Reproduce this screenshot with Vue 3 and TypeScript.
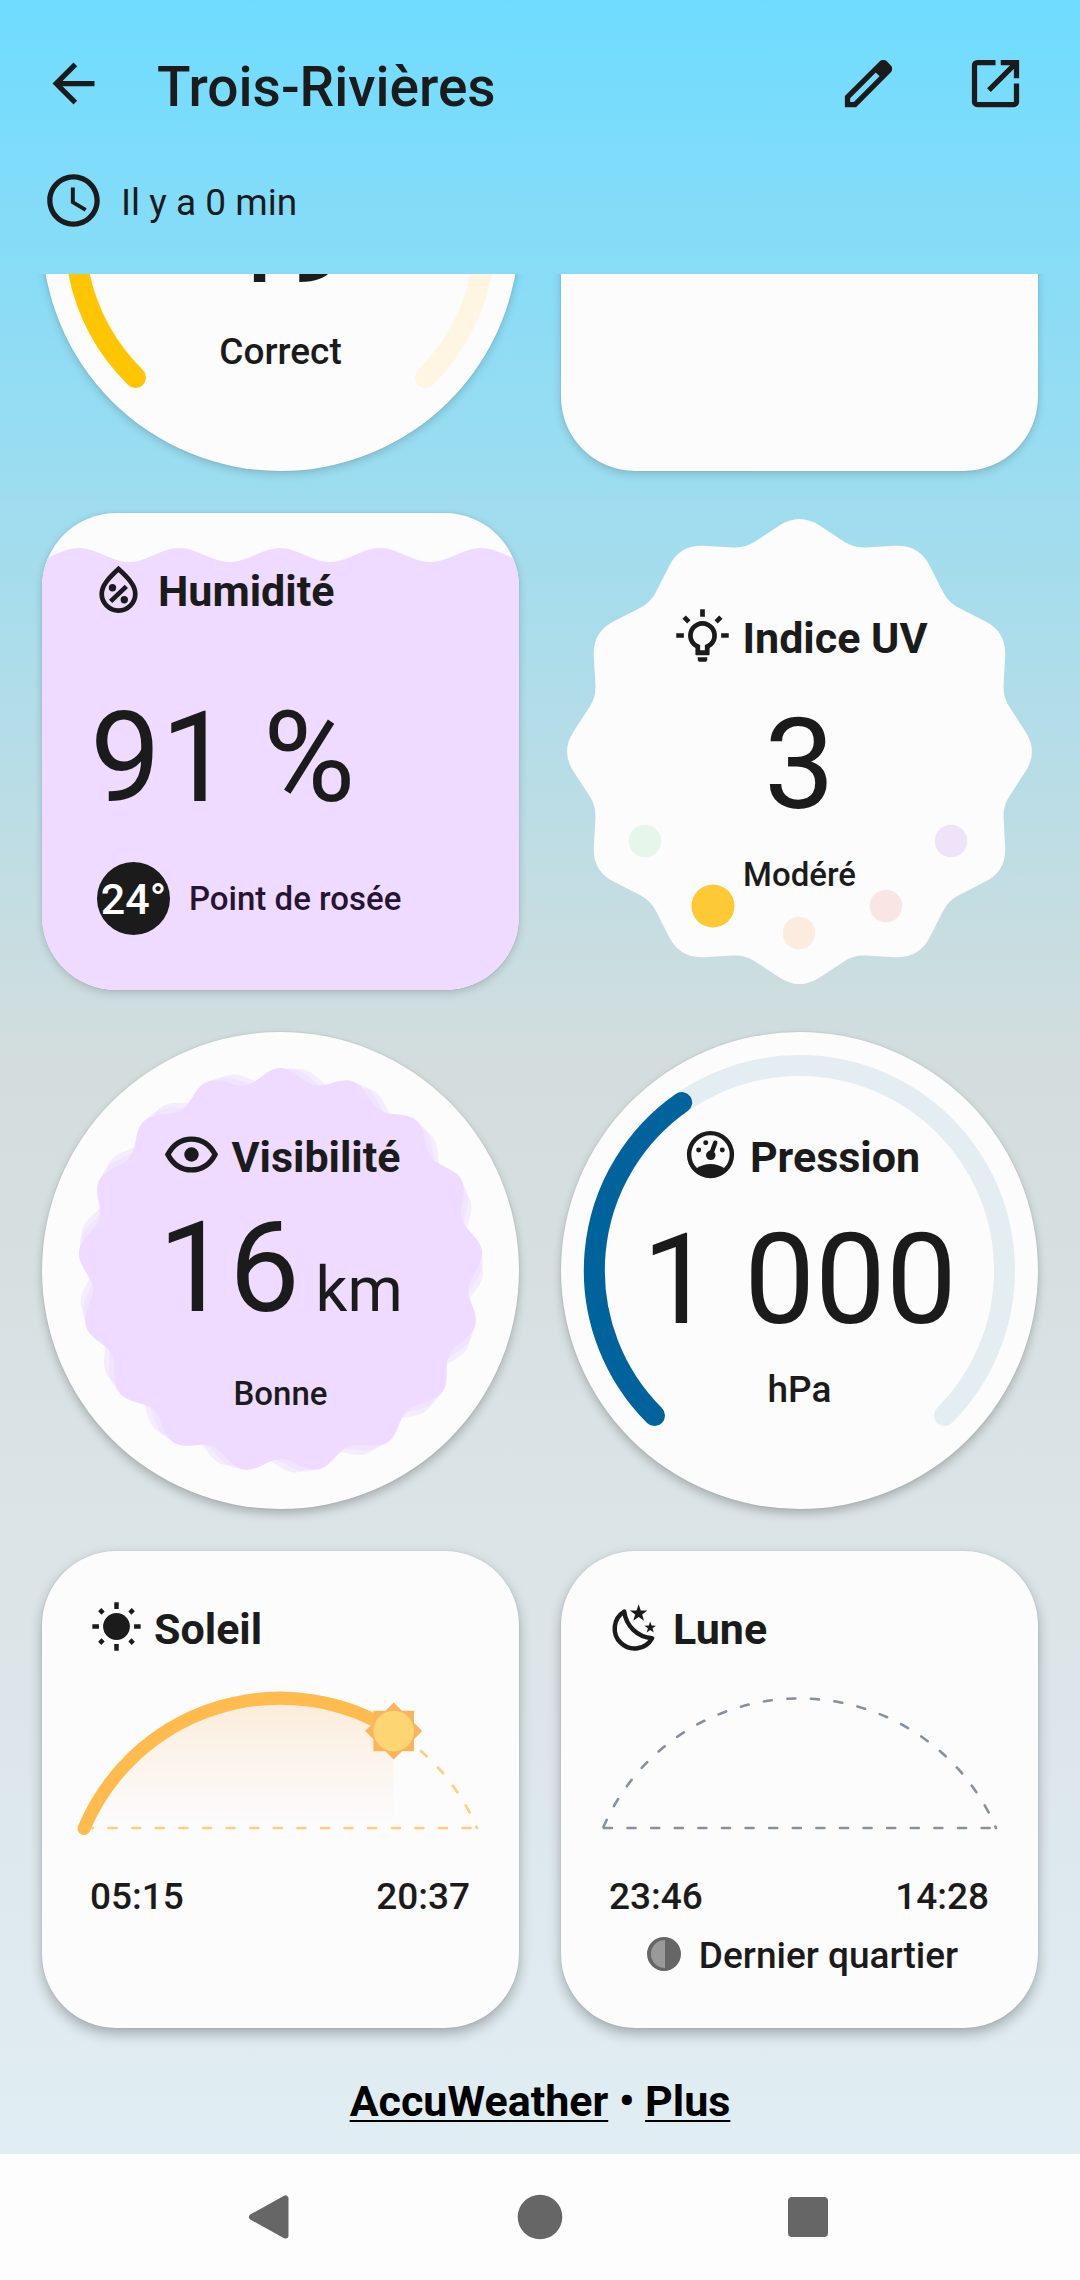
<script setup lang="ts">
interface Point {
  x: number
  y: number
}

interface UvDot extends Point {
  color: string
  active?: boolean
}

const polar = (cx: number, cy: number, radius: number, degrees: number): Point => {
  const rad = ((degrees - 90) * Math.PI) / 180
  return { x: cx + radius * Math.cos(rad), y: cy + radius * Math.sin(rad) }
}

const fmt = (p: Point): string => `${p.x.toFixed(2)} ${p.y.toFixed(2)}`

const towards = (from: Point, to: Point, distance: number): Point => {
  const length = Math.hypot(to.x - from.x, to.y - from.y)
  return {
    x: from.x + ((to.x - from.x) * distance) / length,
    y: from.y + ((to.y - from.y) * distance) / length,
  }
}

/* Star polygon whose tips and valleys are rounded off */
const roundedStar = (tips: number, outer: number, inner: number): string => {
  const count = tips * 2
  const vertices = Array.from({ length: count }, (_, i) =>
    polar(238.5, 238.5, i % 2 ? inner : outer, (360 / count) * i),
  )
  const parts = vertices.map((vertex, i) => {
    const previous = vertices[(i + count - 1) % count]
    const next = vertices[(i + 1) % count]
    const cut = i % 2 ? 12 : 24
    const start = towards(vertex, previous, cut)
    const end = towards(vertex, next, cut)
    return `${i ? 'L' : 'M'}${fmt(start)}Q${fmt(vertex)} ${fmt(end)}`
  })
  return parts.join('') + 'Z'
}

/* Circle with a sinusoidal edge */
const scallop = (lobes: number, radius: number, amplitude: number): string => {
  const points: string[] = []
  for (let degrees = 0; degrees < 360; degrees += 1) {
    const wave = amplitude * Math.cos((degrees * lobes * Math.PI) / 180)
    points.push(fmt(polar(238.5, 238.5, radius + wave, degrees)))
  }
  return `M${points.join('L')}Z`
}

const star = (cx: number, cy: number, radius: number): string =>
  Array.from({ length: 10 }, (_, i) =>
    fmt(polar(cx, cy, i % 2 ? radius * 0.4 : radius, i * 36)),
  ).join(' ')

const uvShape = roundedStar(12, 239, 210.6)
const visibilityShape = scallop(17, 195.5, 7)
const bigStar = star(13.2, 7, 3.5)
const smallStar = star(17.6, 12.4, 2.3)
const rayAngles = [0, 90, 180, 270]

const uvDots: UvDot[] = [
  { x: 84, y: 328, color: '#e6f6ea' },
  { x: 152, y: 393, color: '#fdc935', active: true },
  { x: 238, y: 420, color: '#fcebdf' },
  { x: 325, y: 393, color: '#f9e5e3' },
  { x: 390, y: 328, color: '#efe3fa' },
]
</script>

<template>
  <div class="page">
    <header class="top">
      <div class="bar">
        <button class="icon-button" type="button" aria-label="Retour">
          <svg class="icon" viewBox="0 0 24 24">
            <path d="M20 11H7.83l5.59-5.59L12 4l-8 8 8 8 1.41-1.41L7.83 13H20v-2z" />
          </svg>
        </button>
        <h1 class="place">Trois-Rivières</h1>
        <div class="actions">
          <button class="icon-button" type="button" aria-label="Modifier">
            <svg class="icon" viewBox="0 0 24 24">
              <path
                fill-rule="evenodd"
                d="M3 21v-4.25L16.2 3.575q.3-.275.663-.425t.762-.15.775.15.65.45L20.425 5q.3.275.438.65T21 6.4t-.137.763-.438.662L7.25 21zM5 19h1.425L16.2 9.225 14.775 7.8 5 17.575z"
              />
            </svg>
          </button>
          <button class="icon-button" type="button" aria-label="Ouvrir">
            <svg class="icon line" viewBox="0 0 24 24" stroke-width="2">
              <path d="M12 4H5a1 1 0 0 0-1 1v14a1 1 0 0 0 1 1h14a1 1 0 0 0 1-1v-7M14 4h6v6M20 4 9.5 14.5" />
            </svg>
          </button>
        </div>
      </div>
      <p class="updated">
        <svg class="icon" viewBox="0 0 24 24" aria-hidden="true">
          <path
            d="M11.99 2C6.47 2 2 6.48 2 12s4.47 10 9.99 10C17.52 22 22 17.52 22 12S17.52 2 11.99 2zM12 20c-4.42 0-8-3.58-8-8s3.58-8 8-8 8 3.58 8 8-3.58 8-8 8zm.5-13H11v6l5.25 3.15.75-1.23-4.5-2.67z"
          />
        </svg>
        <span>Il y a 0 min</span>
      </p>
    </header>

    <main class="scroller">
      <div class="grid">
        <section class="card dial air">
          <svg class="art" viewBox="0 0 477 477" aria-hidden="true">
            <path class="arc" stroke="#fef6e2" d="M93.5 383.5A205 205 0 1 1 383.5 383.5" />
            <path class="arc" stroke="#ffc500" d="M93.5 383.5A205 205 0 0 1 50 155" />
          </svg>
          <p class="value">49</p>
          <p class="caption large">Correct</p>
        </section>

        <section class="card"></section>

        <section class="card humidity">
          <svg class="art" viewBox="0 0 477 477" aria-hidden="true">
            <path
              fill="#eedbff"
              d="M-13 49C5 49 19 35 37 35S69 49 87 49 119 35 137 35 170 49 188 49 220 35 238 35 270 49 288 49 320 35 338 35 370 49 388 49 421 35 439 35 471 49 489 49V477H-13Z"
            />
          </svg>
          <h2 class="heading">
            <svg class="icon line" viewBox="0 0 24 24" stroke-width="1.8" aria-hidden="true">
              <path d="M12 4.6C8.5 7.8 5.6 10.7 5.6 14a6.4 6.4 0 0 0 12.8 0C18.4 10.7 15.5 7.8 12 4.6zM9 16.9l6-5.7" />
              <circle class="solid" cx="9.7" cy="11.7" r="1.4" />
              <circle class="solid" cx="14.2" cy="16.3" r="1.4" />
            </svg>
            <span>Humidité</span>
          </h2>
          <p class="value">91 %</p>
          <p class="dew">
            <span class="badge">24°</span>
            <span class="dew-label">Point de rosée</span>
          </p>
        </section>

        <section class="card dial uv">
          <svg class="art" viewBox="0 0 477 477" aria-hidden="true">
            <path fill="#fcfcfc" :d="uvShape" />
            <circle
              v-for="dot in uvDots"
              :key="dot.color"
              :cx="dot.x"
              :cy="dot.y"
              :r="dot.active ? 21.5 : 16.3"
              :fill="dot.color"
            />
          </svg>
          <h2 class="heading">
            <svg class="icon line" viewBox="0 0 24 24" stroke-width="1.8" aria-hidden="true">
              <path d="M12 2v2.9M2 12h2.9M19.1 12H22M5 5l1.8 1.8M19 5l-1.8 1.8" />
              <path
                class="solid"
                fill-rule="evenodd"
                d="M9.3 19.2V16.8A5.5 5.5 0 1 1 14.7 16.8V19.2Q14.7 19.5 14.4 19.5H9.6Q9.3 19.5 9.3 19.2ZM11.1 17.6H12.9V15.6A3.7 3.7 0 1 0 11.1 15.6Z"
              />
              <path class="solid" d="M10.2 20.3h3.6v.7a1 1 0 0 1-1 1h-1.6a1 1 0 0 1-1-1z" />
            </svg>
            <span>Indice UV</span>
          </h2>
          <p class="value">3</p>
          <p class="caption">Modéré</p>
        </section>

        <section class="card dial visibility">
          <svg class="art" viewBox="0 0 477 477" aria-hidden="true">
            <g fill="#eedbff">
              <path opacity=".5" transform="rotate(6 238.5 238.5)" :d="visibilityShape" />
              <path opacity=".5" transform="rotate(3 238.5 238.5)" :d="visibilityShape" />
              <path :d="visibilityShape" />
            </g>
          </svg>
          <h2 class="heading">
            <svg class="icon line" viewBox="0 0 24 24" stroke-width="2" aria-hidden="true">
              <path d="M3 12C5 8.2 8.2 6.1 12 6.1S19 8.2 21 12C19 15.8 15.8 17.9 12 17.9S5 15.8 3 12Z" />
              <circle class="solid" cx="12" cy="12" r="2.75" />
            </svg>
            <span>Visibilité</span>
          </h2>
          <p class="value">16<span class="unit"> km</span></p>
          <p class="caption">Bonne</p>
        </section>

        <section class="card dial pressure">
          <svg class="art" viewBox="0 0 477 477" aria-hidden="true">
            <path class="arc" stroke="#e4edf2" d="M93.5 383.5A205 205 0 1 1 383.5 383.5" />
            <path class="arc" stroke="#00639b" d="M93.5 383.5A205 205 0 0 1 120.7 70.5" />
          </svg>
          <h2 class="heading">
            <svg class="icon line" viewBox="0 0 24 24" stroke-width="1.7" aria-hidden="true">
              <circle cx="12" cy="12" r="8.15" />
              <path stroke-linecap="round" d="M12.1 12.2 13.8 7.5" />
              <circle class="solid" cx="12.1" cy="12.3" r="1.8" />
              <circle class="solid" cx="7.5" cy="10.3" r=".95" />
              <circle class="solid" cx="10.2" cy="7.5" r=".95" />
              <circle class="solid" cx="16.5" cy="10.3" r=".95" />
              <path class="solid" d="M5.8 18.2L6.8 17.1Q12 14.2 17.2 17.1L18.2 18.2A8.7 8.7 0 0 1 5.8 18.2Z" />
            </svg>
            <span>Pression</span>
          </h2>
          <p class="value">1 000</p>
          <p class="caption large">hPa</p>
        </section>

        <section class="card astro">
          <h2 class="heading">
            <svg class="icon line" viewBox="0 0 24 24" stroke-width="1.7" aria-hidden="true">
              <circle class="solid" cx="12" cy="12" r="5.1" />
              <g v-for="angle in rayAngles" :key="angle" :transform="`rotate(${angle} 12 12)`">
                <path d="M12 2.8v2.5M17.1 6.9l1.3-1.3" />
              </g>
            </svg>
            <span>Soleil</span>
          </h2>
          <svg class="course" viewBox="43 113 391 207" aria-hidden="true">
            <defs>
              <linearGradient id="daylight" x1="0" y1="0" x2="0" y2="1">
                <stop offset="0" stop-color="#fbecda" />
                <stop offset=".5" stop-color="#fcf4ed" />
                <stop offset="1" stop-color="#fcfcfe" />
              </linearGradient>
            </defs>
            <path fill="url(#daylight)" d="M42 277A213.8 213.8 0 0 1 351.7 180V277Z" />
            <path class="dash day" d="M42 277H434M42 277A213.8 213.8 0 0 1 435 277" />
            <path
              fill="none"
              stroke="#ffbb4d"
              stroke-width="13"
              stroke-linecap="round"
              d="M42 277.5A212.8 212.8 0 0 1 351.7 180"
            />
            <g fill="#fab55c" transform="translate(351.7 180)">
              <path d="M-20.3-20.3H20.3V20.3H-20.3ZM0-28.5 28.5 0 0 28.5-28.5 0Z" />
              <circle r="20.3" fill="#fed573" />
            </g>
          </svg>
          <p class="times"><time>05:15</time><time>20:37</time></p>
        </section>

        <section class="card astro">
          <h2 class="heading">
            <svg class="icon line" viewBox="0 0 24 24" stroke-width="1.7" aria-hidden="true">
              <path
                stroke-linejoin="round"
                d="M7.7 6.3A7.6 7.6 0 1 0 18.3 16.5A11.6 11.6 0 0 1 7.7 6.3Z"
              />
              <polygon class="solid" :points="bigStar" />
              <polygon class="solid" :points="smallStar" />
            </svg>
            <span>Lune</span>
          </h2>
          <svg class="course" viewBox="43 113 391 207" aria-hidden="true">
            <path class="dash night" d="M42 277H434M42 277A213.8 213.8 0 0 1 435 277" />
          </svg>
          <p class="times"><time>23:46</time><time>14:28</time></p>
          <p class="phase">
            <svg class="phase-icon" viewBox="0 0 42 42" aria-hidden="true">
              <circle cx="21" cy="21" r="17" fill="#666" />
              <path fill="#999" d="M22 7V35A14 14 0 0 1 22 7Z" />
            </svg>
            <span>Dernier quartier</span>
          </p>
        </section>
      </div>
      <p class="source"><a href="#accuweather">AccuWeather</a> • <a href="#plus">Plus</a></p>
    </main>

    <nav class="system" aria-label="Navigation">
      <button class="system-button" type="button" aria-label="Précédent">
        <svg viewBox="0 0 48 48">
          <path stroke="#666" stroke-width="6" stroke-linejoin="round" d="M6 24 39.5 5.5V42.5Z" />
        </svg>
      </button>
      <button class="system-button" type="button" aria-label="Accueil">
        <svg viewBox="0 0 48 48"><circle cx="24" cy="24" r="22.3" /></svg>
      </button>
      <button class="system-button" type="button" aria-label="Applications récentes">
        <svg viewBox="0 0 48 48"><rect x="2" y="4" width="40" height="40" rx="4" /></svg>
      </button>
    </nav>
  </div>
</template>

<style>
html,
body {
  margin: 0;
}
</style>

<style scoped>
.page {
  display: flex;
  flex-direction: column;
  height: 100vh;
  background: linear-gradient(#6fdcff 0, #d4dddd 47%, #dbe4e7 69%, #e0edf3 94%);
  color: #1c1b1b;
  font-family: Roboto, "Liberation Sans", sans-serif;
}

h1,
h2,
p {
  margin: 0;
}

button {
  border: 0;
  padding: 0;
  background: none;
  color: inherit;
  font: inherit;
}

.icon {
  display: block;
  flex: none;
  width: 63px;
  height: 63px;
  fill: currentColor;
}

.line {
  fill: none;
  stroke: currentColor;
}

.solid {
  fill: currentColor;
  stroke: none;
}

.top {
  flex: none;
  padding: 52px 53px 42px 42px;
}

.bar {
  display: flex;
  align-items: center;
  height: 63px;
  gap: 52px;
}

.place {
  flex: 1;
  padding-top: 6px;
  font-size: 55px;
  line-height: 62px;
  font-weight: 500;
}

.actions {
  display: flex;
  gap: 64px;
}

.updated {
  display: flex;
  align-items: center;
  gap: 16px;
  margin-top: 54px;
  font-size: 37px;
  line-height: 52px;
}

.updated span {
  padding-top: 4px;
}

/* Scrolled to its end: the first row runs up under the header */
.scroller {
  display: flex;
  flex: 1;
  flex-direction: column;
  justify-content: flex-end;
  min-height: 0;
  overflow: hidden;
}

.grid {
  display: grid;
  flex: none;
  grid-template-columns: 1fr 1fr;
  gap: 42px;
  padding: 0 42px;
}

.card {
  position: relative;
  display: flex;
  flex-direction: column;
  box-sizing: border-box;
  aspect-ratio: 1;
  overflow: hidden;
  border-radius: 74px;
  background: #fcfcfc;
  box-shadow: 0 3px 8px rgba(0, 0, 0, 0.17), 0 0 2px rgba(0, 0, 0, 0.1);
}

.art {
  position: absolute;
  inset: 0;
  width: 100%;
  height: 100%;
}

.arc {
  fill: none;
  stroke-width: 21;
  stroke-linecap: round;
}

.heading {
  position: relative;
  display: flex;
  align-items: center;
  gap: 8px;
  height: 69px;
  font-size: 43px;
  line-height: 63px;
  font-weight: 700;
}

.heading .icon {
  margin-bottom: 6px;
}

.value {
  position: relative;
  font-size: 126px;
  line-height: 148px;
}

.unit {
  font-size: 63px;
}

.dial {
  align-items: center;
  padding: 91px 0 93px;
  border-radius: 50%;
}

.caption {
  position: relative;
  margin-top: auto;
  font-size: 33px;
  line-height: 44px;
  font-weight: 500;
}

.caption.large {
  font-size: 37px;
  line-height: 52px;
}

.air .value {
  margin-top: 80px;
}

.uv {
  overflow: visible;
  background: none;
  box-shadow: none;
}

.uv .value {
  margin-top: 18px;
}

.visibility .value {
  margin-top: 2px;
}

.pressure .value {
  margin-top: 14px;
}

.visibility,
.pressure {
  box-shadow: 0 5px 10px rgba(0, 0, 0, 0.22), 0 0 2px rgba(0, 0, 0, 0.12);
}

.humidity {
  padding: 44px 45px 55px;
}

.humidity .value {
  margin-top: 58px;
  padding-left: 3px;
}

.dew {
  position: relative;
  display: flex;
  align-items: center;
  gap: 19px;
  margin-top: auto;
  padding-left: 10px;
}

.badge {
  box-sizing: border-box;
  width: 73px;
  height: 73px;
  border-radius: 50%;
  background: #1c1b1b;
  color: #fff;
  font-size: 43px;
  line-height: 75px;
  font-weight: 500;
  text-align: center;
}

.dew-label {
  color: #271430;
  font-size: 33px;
  line-height: 44px;
  font-weight: 500;
}

.astro {
  padding: 44px 43px;
  box-shadow: 0 6px 13px rgba(0, 0, 0, 0.27), 0 0 2px rgba(0, 0, 0, 0.12);
}

.astro .heading {
  gap: 6px;
}

.course {
  display: block;
  width: 100%;
  overflow: visible;
}

.dash {
  fill: none;
  stroke-width: 2.6;
  stroke-linecap: round;
  stroke-dasharray: 8 15.6;
  stroke-dashoffset: -1;
}

.day {
  stroke: #ffcd80;
}

.night {
  stroke: #8790a0;
}

.times {
  display: flex;
  justify-content: space-between;
  padding: 0 6px 0 5px;
  font-size: 37px;
  line-height: 52px;
  font-weight: 500;
}

.phase {
  display: flex;
  align-items: center;
  justify-content: center;
  gap: 14px;
  margin-top: 7px;
  padding-left: 2px;
  font-size: 37px;
  line-height: 52px;
  font-weight: 500;
}

.phase-icon {
  width: 42px;
  height: 42px;
  margin-bottom: 4px;
}

.source {
  flex: none;
  padding: 42px 0 21px;
  color: #000;
  font-size: 43px;
  line-height: 63px;
  font-weight: 700;
  text-align: center;
}

.source a {
  color: inherit;
  text-decoration-thickness: 2px;
  text-underline-offset: 4px;
}

.system {
  display: flex;
  flex: none;
  align-items: center;
  justify-content: center;
  gap: 222px;
  height: 126px;
  background: #fdfdfe;
}

.system-button svg {
  display: block;
  width: 48px;
  height: 48px;
  fill: #666;
}
</style>
